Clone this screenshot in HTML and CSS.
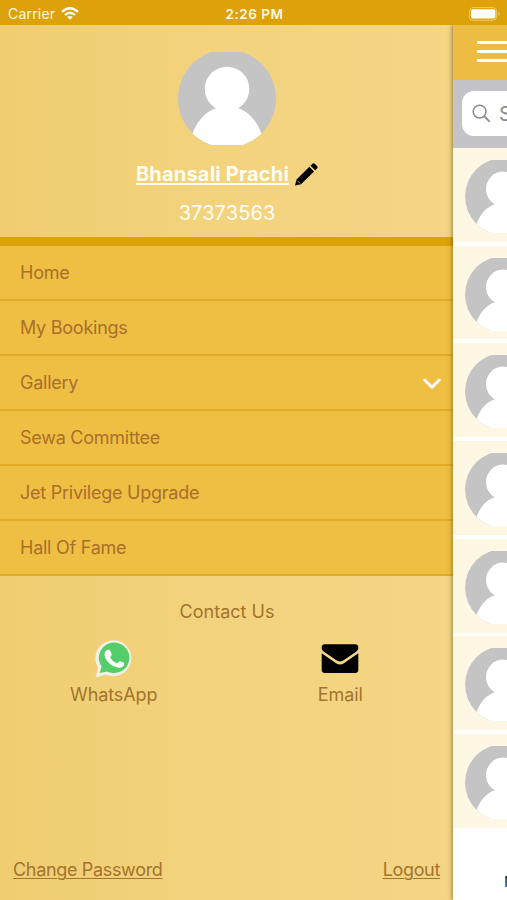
FILE: index.html
```html
<!DOCTYPE html>
<html lang="en">
<head>
<meta charset="utf-8">
<title>Menu</title>
<link rel="stylesheet" href="styles.css">
</head>
<body>
<svg class="defs" aria-hidden="true">
  <symbol id="avatar" viewBox="0 0 98 93">
    <clipPath id="disc"><circle cx="49" cy="46.5" r="49"/></clipPath>
    <g clip-path="url(#disc)">
      <rect width="98" height="93" fill="#c4c4c4"/>
      <circle cx="49" cy="37" r="22.3" fill="#fff"/>
      <path d="M13 86C18 70 27 59 39 56V50H59V56C71 59 80 70 85 86V93H13Z" fill="#fff"/>
    </g>
  </symbol>
</svg>
<header class="status">
  <div class="carrier"><span>Carrier</span>
    <svg width="18" height="13" viewBox="0 0 18 13" fill="none" stroke="#fffdf5" stroke-width="2.3"><path d="M1 4.8Q9-2.2 17 4.8M3.9 8Q9 3.5 14.1 8"/><path d="M9 12.8L6.2 10Q9 7.8 11.8 10Z" fill="#fffdf5" stroke="none"/></svg>
  </div>
  <span class="clock">2:26 PM</span>
  <svg class="battery" width="32" height="14" viewBox="0 0 32 14"><rect x=".6" y=".6" width="27" height="12.6" rx="3.5" fill="none" stroke="#efcb6d"/><rect x="2" y="2.2" width="24.4" height="9.4" rx="2" fill="#fff"/><path d="M29.3 4.8Q32 7 29.3 9.2Z" fill="#efcb6d"/></svg>
</header>
<div class="screen">
  <aside class="drawer">
    <section class="profile">
      <svg class="photo"><use href="#avatar"/></svg>
      <div class="name-row"><a class="name">Bhansali Prachi</a>
        <svg width="23" height="23" viewBox="0 0 23 23"><path d="M0 22.5L1.5 16.5L14.4 3.8L19 8.4L6 21.2ZM15.5 2.7L17.5.8Q18.7-.2 20 1L22 3Q23.2 4.3 22.2 5.3L20.2 7.3Z"/><path d="M2.2 17.5L5.2 20.5" stroke="#f3d37e" stroke-width=".7"/></svg>
      </div>
      <div class="number">37373563</div>
    </section>
    <nav class="menu">
      <a class="item"><span>Home</span></a>
      <a class="item"><span>My Bookings</span></a>
      <a class="item"><span>Gallery</span><svg width="18" height="12" viewBox="0 0 18 12" fill="none" stroke="#fff" stroke-width="3" stroke-linecap="round"><path d="M1.7 2L9 9.2L16.3 2"/></svg></a>
      <a class="item"><span>Sewa Committee</span></a>
      <a class="item"><span>Jet Privilege Upgrade</span></a>
      <a class="item"><span>Hall Of Fame</span></a>
    </nav>
    <section class="contact">
      <div class="contact-title">Contact Us</div>
      <div class="channels">
        <a class="channel"><svg width="38" height="38" viewBox="0 0 38 38"><path d="M.5 37.5L3.2 28A18 18 0 1 1 10.5 34.5Z" fill="#f0f1e9"/><path d="M4.8 32.9L6.6 26.6A15.3 15.3 0 1 1 12.1 31.4Z" fill="#55ce69"/><path d="M13.3 9.8Q14.6 9.3 15.3 10.9L16.8 14.3Q17.1 15.3 15.1 17.4Q17.6 21.8 22 23.5L24 21.4Q24.6 20.8 25.4 21.2L28.8 22.8Q29.6 23.4 28.9 25.3Q27.2 28.6 22.3 27.6Q13.7 25.3 10.2 17.8Q8.3 12.6 11.6 10.1Z" fill="#fff"/></svg><span>WhatsApp</span></a>
        <a class="channel"><svg width="38" height="38" viewBox="0 0 38 38"><path d="M4 4.2H34Q37.3 4.2 37.3 7.5V8.5Q37 10.3 35 11.8L23 20.1Q19 22.8 15 20.1L3 11.8Q.9 10.3.7 8.5V7.5Q.7 4.2 4 4.2ZM.7 13.3L15 23.3Q19 25.7 23 23.3L37.3 13.3V29.7Q37.3 33 34 33H4Q.7 33 .7 29.7Z"/></svg><span>Email</span></a>
      </div>
    </section>
    <footer class="links"><a>Change Password</a><a>Logout</a></footer>
  </aside>
  <main class="page">
    <div class="bar"><i></i><i></i><i></i></div>
    <div class="search"><div class="field"><svg width="19" height="19" viewBox="0 0 19 19" fill="none" stroke="#8b8b8d"><circle cx="7.6" cy="7.6" r="6.4" stroke-width="1.5"/><path d="M12.4 12.4L17.6 17.6" stroke-width="2"/></svg><span>S</span></div></div>
    <div class="people">
      <div class="person"><svg><use href="#avatar"/></svg></div>
      <div class="person"><svg><use href="#avatar"/></svg></div>
      <div class="person"><svg><use href="#avatar"/></svg></div>
      <div class="person"><svg><use href="#avatar"/></svg></div>
      <div class="person"><svg><use href="#avatar"/></svg></div>
      <div class="person"><svg><use href="#avatar"/></svg></div>
      <div class="person"><svg><use href="#avatar"/></svg></div>
    </div>
    <div class="tab">M</div>
  </main>
</div>
</body>
</html>
```
FILE: styles.css
```css
* { box-sizing: border-box; }
body { margin: 0; width: 507px; height: 900px; overflow: hidden; font-family: Inter, "Liberation Sans", sans-serif; background: #fff; }
svg { display: block; flex: none; }
.defs { position: absolute; width: 0; height: 0; }
.status { height: 25px; background: #dda109; color: #fff8e2; display: grid; grid-template-columns: 1fr auto 1fr; align-items: center; padding: 2px 6px 0 8px; font-size: 14px; }
.carrier { display: flex; align-items: center; gap: 6px; letter-spacing: .2px; }
.clock { font-weight: 600; font-size: 13.5px; letter-spacing: .5px; }
.battery { justify-self: end; }
.screen { display: flex; height: 875px; }
.drawer { width: 453px; flex: none; display: flex; flex-direction: column; background: linear-gradient(90deg, #f0cd71, #f3d37e 50%, #f3d584); color: #a3742c; font-size: 18px; }
.profile { height: 212px; padding: 27px 0 0 1px; display: flex; flex-direction: column; align-items: center; color: #fffdf4; }
.photo { width: 98px; height: 93px; }
.name-row { display: flex; align-items: center; gap: 6px; margin-top: 16px; height: 26px; }
.name { font-size: 20px; font-weight: 700; letter-spacing: .2px; text-decoration: underline; text-decoration-thickness: 1.5px; text-underline-offset: 2px; }
.number { margin-top: 13px; line-height: 26px; font-size: 20px; letter-spacing: .1px; }
.menu { border-top: 9px solid #dda109; background: #efbf43; height: 339px; color: #a96f2b; letter-spacing: -.25px; }
.item { height: 55px; padding: 0 13px 0 20px; display: flex; align-items: center; justify-content: space-between; border-bottom: 2px solid #e3aa26; }
.item svg { margin: 2px -1px 0 0; }
.contact { padding-top: 24px; }
.contact-title { text-align: center; line-height: 22px; padding: 1px 0 0 1px; }
.channels { display: flex; margin-top: 17px; letter-spacing: -.1px; }
.channel { width: 226px; display: flex; flex-direction: column; align-items: center; gap: 6px; line-height: 22px; }
.channel:first-child { width: 228px; }
.links { margin-top: auto; padding: 0 13px 19px; display: flex; justify-content: space-between; line-height: 22px; letter-spacing: -.33px; text-decoration: underline; text-decoration-thickness: 1.3px; text-underline-offset: 2px; }
.page { flex: 1; min-width: 0; overflow: hidden; background: #fff; box-shadow: -1px 0 4px #5d481a99; position: relative; clip-path: inset(0 0 0 -8px); }
.bar { height: 55px; background: #edbc43; padding: 16px 0 0 24px; display: flex; flex-direction: column; gap: 6px; }
.bar i { width: 34px; height: 3px; background: #fff; border-radius: 1px; }
.search { height: 68px; background: #c4c3c8; padding: 11px 0 0 9px; }
.field { width: 300px; height: 45px; border-radius: 12px; background: #fff; display: flex; align-items: center; gap: 8px; padding-left: 10px; font-size: 20px; color: #8b8b8d; }
.people { height: 679px; display: flex; flex-direction: column; gap: 3.9px; }
.person { height: 93.8px; flex: none; background: #fdf7e4; padding: 12px 0 0 12px; }
.person svg { width: 77px; height: 73px; }
.tab { padding: 46px 0 0 51px; font-size: 15px; line-height: 18px; color: #222; }
```
